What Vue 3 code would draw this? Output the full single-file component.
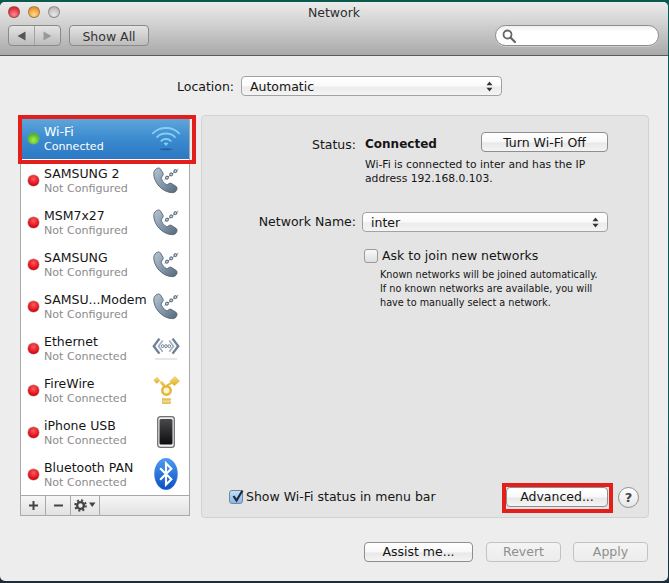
<script setup>
const rows = [
  { name: 'SAMSUNG 2', sub: 'Not Configured', icon: 'phone' },
  { name: 'MSM7x27', sub: 'Not Configured', icon: 'phone' },
  { name: 'SAMSUNG', sub: 'Not Configured', icon: 'phone' },
  { name: 'SAMSU...Modem', sub: 'Not Configured', icon: 'phone' },
  { name: 'Ethernet', sub: 'Not Connected', icon: 'ethernet' },
  { name: 'FireWire', sub: 'Not Connected', icon: 'firewire' },
  { name: 'iPhone USB', sub: 'Not Connected', icon: 'iphone' },
  { name: 'Bluetooth PAN', sub: 'Not Connected', icon: 'bluetooth' }
]
</script>

<template>
  <div class="page">
    <svg class="defs" width="0" height="0" aria-hidden="true">
      <defs>
        <linearGradient id="gPhone" x1="0" y1="0" x2="1" y2="1">
          <stop offset="0" stop-color="#b9c6d2" />
          <stop offset="0.55" stop-color="#8095a8" />
          <stop offset="1" stop-color="#56687a" />
        </linearGradient>
        <linearGradient id="gBt" x1="0" y1="0" x2="0" y2="1">
          <stop offset="0" stop-color="#4f9bf0" />
          <stop offset="1" stop-color="#0b4fc4" />
        </linearGradient>
        <linearGradient id="gGold" x1="0" y1="0" x2="0" y2="1">
          <stop offset="0" stop-color="#f6dc78" />
          <stop offset="1" stop-color="#dfae2c" />
        </linearGradient>
        <linearGradient id="gScreen" x1="0" y1="0" x2="0" y2="1">
          <stop offset="0" stop-color="#4a4a4a" />
          <stop offset="1" stop-color="#0c0c0c" />
        </linearGradient>
        <symbol id="i-phone" viewBox="0 0 32 32">
          <path d="M3 8C4 4 8 2 10 4L13 9C13.6 11 11 12.500 10.800 14C11.500 16.500 14 20 17 21.200C18.500 21 19.500 18.500 21.500 19.500L27 23C29 25 27 29.500 23 29.500C12 29.500 2 18 3 8Z" fill="url(#gPhone)" stroke="#4f6070" stroke-width="0.900" />
          <path d="M14.500 15.500L29 4.500" stroke="#6c7c8c" stroke-width="1" />
          <circle cx="17" cy="13.500" r="1.600" fill="#c6d0da" stroke="#46586a" stroke-width="1" />
          <circle cx="21.500" cy="10" r="1.600" fill="#c6d0da" stroke="#46586a" stroke-width="1" />
          <circle cx="26" cy="6.500" r="1.600" fill="#c6d0da" stroke="#46586a" stroke-width="1" />
        </symbol>
        <symbol id="i-wifi" viewBox="0 0 32 32">
          <g fill="none" stroke="#86cdf6" stroke-linecap="round">
            <path d="M2 11C9 3.500 23 3.500 30 11" stroke-width="2" />
            <path d="M6.500 15C11 10 21 10 25.500 15" stroke-width="2" />
            <path d="M11 19C13.500 16.500 18.500 16.500 21 19" stroke-width="2" />
          </g>
          <path d="M13.500 21.500Q16 20 18.500 21.500L16 24.500Z" fill="#86cdf6" />
          <ellipse cx="16" cy="28" rx="7" ry="1.300" fill="#1d5a94" opacity="0.7" />
        </symbol>
        <symbol id="i-ethernet" viewBox="0 0 32 32">
          <g fill="none" stroke-linejoin="miter">
            <path d="M9 6L3 14L9 22" stroke="#6f8096" stroke-width="2.600" />
            <path d="M12.500 8L8 14L12.500 20" stroke="#a3b0c0" stroke-width="1.800" />
            <path d="M23 6L29 14L23 22" stroke="#6f8096" stroke-width="2.600" />
            <path d="M19.500 8L24 14L19.500 20" stroke="#a3b0c0" stroke-width="1.800" />
          </g>
          <circle cx="12.500" cy="14" r="1.500" fill="#fff" stroke="#5f6f80" stroke-width="0.900" />
          <circle cx="16" cy="14" r="1.500" fill="#fff" stroke="#5f6f80" stroke-width="0.900" />
          <circle cx="19.500" cy="14" r="1.500" fill="#fff" stroke="#5f6f80" stroke-width="0.900" />
          <rect x="4" y="27" width="24" height="1.500" rx="0.700" fill="#e0e0e0" />
        </symbol>
        <symbol id="i-firewire" viewBox="0 0 32 32">
          <g fill="url(#gGold)" stroke="#d3a52a" stroke-width="0.400">
            <path d="M3 5.500L6.500 2.500L9.500 6L6 9Z" />
            <path d="M9.500 8L11.500 6.500L15 10.500L13 12Z" />
            <path d="M20 7L25.500 1.500L30.500 6.500L25 11.500Z" />
            <rect x="12" y="25" width="9" height="2" />
            <rect x="12" y="28.500" width="9" height="2" />
          </g>
          <circle cx="16.500" cy="16.500" r="4.500" fill="#fbf3cf" stroke="#e3b636" stroke-width="2.600" />
          <path d="M17 11L22 8.500" stroke="#e3b636" stroke-width="2" />
        </symbol>
        <symbol id="i-iphone" viewBox="0 0 18 32">
          <rect x="0.700" y="0.700" width="16.600" height="30.600" rx="2.600" fill="#eceef0" stroke="#6e7073" stroke-width="1.300" />
          <rect x="2.500" y="3" width="13" height="25.500" rx="1.500" fill="url(#gScreen)" />
        </symbol>
        <symbol id="i-bluetooth" viewBox="0 0 22 30">
          <ellipse cx="11" cy="15" rx="10.800" ry="14.800" fill="url(#gBt)" stroke="#3f86df" stroke-width="0.500" />
          <path d="M5.500 9.500L16 20L11 25V5L16 10L5.500 20.500" fill="none" stroke="#fff" stroke-width="2" />
        </symbol>
        <symbol id="i-updown" viewBox="0 0 7 11">
          <path d="M3.500 0.500L6.500 4.300H0.500Z" fill="#333" />
          <path d="M3.500 10.500L6.500 6.700H0.500Z" fill="#333" />
        </symbol>
      </defs>
    </svg>

    <div class="window">
      <header class="toolbar">
        <div class="titlebar">
          <div class="lights">
            <span class="light red"></span>
            <span class="light amber"></span>
            <span class="light grey"></span>
          </div>
          <div class="title">Network</div>
        </div>
        <div class="tools">
          <div class="segment">
            <span class="seg"><svg width="9" height="10" viewBox="0 0 9 10"><path d="M0.500 5L8.500 0.500V9.500Z" fill="#555" /></svg></span>
            <span class="seg off"><svg width="9" height="10" viewBox="0 0 9 10"><path d="M8.500 5L0.500 0.500V9.500Z" fill="#999" /></svg></span>
          </div>
          <button class="tool-btn">Show All</button>
          <div class="search">
            <svg width="14" height="14" viewBox="0 0 14 14">
              <circle cx="5.500" cy="5.500" r="4" fill="none" stroke="#666" stroke-width="1.800" />
              <path d="M8.500 8.500L13 13" stroke="#666" stroke-width="2.200" stroke-linecap="round" />
            </svg>
          </div>
        </div>
      </header>

      <div class="location">
        <span class="loc-label">Location:</span>
        <div class="select loc-select">
          <span>Automatic</span>
          <svg width="7" height="11"><use href="#i-updown" /></svg>
        </div>
      </div>

      <div class="content">
        <aside class="sidebar">
          <div class="list">
            <div class="row selected">
              <span class="dot green"></span>
              <div class="row-text">
                <div class="row-name">Wi-Fi</div>
                <div class="row-sub">Connected</div>
              </div>
              <svg class="row-icon"><use href="#i-wifi" /></svg>
            </div>
            <div v-for="r in rows" :key="r.name" class="row">
              <span class="dot"></span>
              <div class="row-text">
                <div class="row-name">{{ r.name }}</div>
                <div class="row-sub">{{ r.sub }}</div>
              </div>
              <svg class="row-icon"><use :href="'#i-' + r.icon" /></svg>
            </div>
          </div>
          <div class="list-foot">
            <span class="foot-cell add">
              <svg width="11" height="11" viewBox="0 0 11 11"><path d="M5.500 1V10M1 5.500H10" stroke="#444" stroke-width="2" /></svg>
            </span>
            <span class="foot-cell add">
              <svg width="11" height="11" viewBox="0 0 11 11"><path d="M1 5.500H10" stroke="#444" stroke-width="2" /></svg>
            </span>
            <span class="foot-cell gear">
              <svg width="22" height="13" viewBox="0 0 22 13">
                <circle cx="6.500" cy="6.500" r="3.400" fill="none" stroke="#444" stroke-width="2.400" />
                <circle cx="6.500" cy="6.500" r="5.300" fill="none" stroke="#444" stroke-width="2" stroke-dasharray="2 2.160" />
                <path d="M15 3.500H21.500L18.250 8Z" fill="#444" />
              </svg>
            </span>
            <span class="foot-rest"></span>
          </div>
        </aside>

        <section class="panel">
          <div class="form-row status-row">
            <span class="label">Status:</span>
            <strong class="status">Connected</strong>
            <button class="btn wifi-off">Turn Wi-Fi Off</button>
          </div>
          <p class="desc">Wi-Fi is connected to inter and has the IP<br />address 192.168.0.103.</p>
          <div class="form-row name-row">
            <span class="label name-label">Network Name:</span>
            <div class="select name-select">
              <span>inter</span>
              <svg width="7" height="11"><use href="#i-updown" /></svg>
            </div>
          </div>
          <label class="ask">
            <span class="check"></span>
            <span class="ask-text">Ask to join new networks</span>
          </label>
          <p class="note">Known networks will be joined automatically.<br />If no known networks are available, you will<br />have to manually select a network.</p>

          <div class="panel-foot">
            <span class="check checked">
              <svg width="15" height="15" viewBox="0 0 15 15"><path d="M3.500 7L6.500 11.500L12.500 1.500" fill="none" stroke="#1d2c40" stroke-width="2.200" /></svg>
            </span>
            <span class="show">Show Wi-Fi status in menu bar</span>
            <button class="btn advanced">Advanced...</button>
            <span class="help">?</span>
          </div>
        </section>
      </div>

      <footer class="actions">
        <button class="btn assist">Assist me...</button>
        <button class="btn dis revert">Revert</button>
        <button class="btn dis apply">Apply</button>
      </footer>

      <div class="mark mark-wifi"></div>
      <div class="mark mark-adv"></div>
    </div>
  </div>
</template>

<style scoped>
.page {
  width: 669px;
  height: 583px;
  padding-top: 2px;
  box-sizing: border-box;
  overflow: hidden;
  background: linear-gradient(180deg, #0c5a4e 0%, #17584e 70%, #1d2d38 100%);
  font-family: "DejaVu Sans", sans-serif;
  font-size: 12.500px;
  color: #151515;
}
.defs { position: absolute; }
.window {
  position: relative;
  width: 668px;
  height: 579px;
  background: #ededed;
  border-radius: 5px;
  overflow: hidden;
}
.toolbar {
  height: 54px;
  box-sizing: border-box;
  border-bottom: 1px solid #5c5c5c;
  background: linear-gradient(180deg, #ececec 0%, #d2d2d2 40%, #a9a9a9 100%);
}
.titlebar {
  position: relative;
  height: 22px;
  display: flex;
  align-items: center;
  justify-content: center;
}
.lights {
  position: absolute;
  left: 8px;
  top: 4px;
  display: flex;
  gap: 8px;
}
.light {
  width: 12px;
  height: 12px;
  border-radius: 50%;
  box-sizing: border-box;
  border: 1px solid rgba(80, 80, 80, 0.45);
}
.red { background: radial-gradient(circle at 50% 75%, #ff8d90, #e23a44 60%, #b71e2a); }
.amber { background: radial-gradient(circle at 50% 75%, #ffdc8a, #eea33a 60%, #c77c1e); }
.grey { background: radial-gradient(circle at 50% 75%, #e8e8e8, #c4c4c4 60%, #a2a2a2); }
.title {
  color: #2e2e2e;
  padding-bottom: 2px;
}
.tools {
  display: flex;
  align-items: center;
  padding: 1px 9px 0 8px;
  height: 21px;
}
.segment {
  width: 53px;
  height: 21px;
  box-sizing: border-box;
  display: flex;
  border: 1px solid #8a8a8a;
  border-radius: 4px;
  background: linear-gradient(180deg, #e4e4e4, #bcbcbc);
}
.seg {
  flex: 1;
  display: flex;
  align-items: center;
  justify-content: center;
}
.seg + .seg { border-left: 1px solid #a2a2a2; }
.tool-btn {
  width: 80px;
  height: 21px;
  margin-left: 8px;
  padding: 2px 0 0;
  border: 1px solid #8a8a8a;
  border-radius: 4px;
  background: linear-gradient(180deg, #e4e4e4, #bcbcbc);
  font: inherit;
  color: #333;
}
.search {
  margin-left: auto;
  width: 164px;
  height: 21px;
  box-sizing: border-box;
  padding-left: 6px;
  display: flex;
  align-items: center;
  border: 1px solid #8c8c8c;
  border-radius: 11px;
  background: linear-gradient(180deg, #f0f0f0, #ffffff 30%);
  box-shadow: 0 1px 0 rgba(255, 255, 255, 0.35);
}
.location {
  display: flex;
  align-items: center;
  height: 20px;
  margin-top: 20px;
  padding-left: 177px;
}
.loc-label { width: 64px; }
.select {
  height: 20px;
  box-sizing: border-box;
  display: flex;
  align-items: center;
  justify-content: space-between;
  border: 1px solid #a2a2a2;
  border-radius: 4px;
  background: linear-gradient(180deg, #ffffff 0%, #fafafa 50%, #ececec 55%, #f4f4f4 100%);
}
.loc-select {
  width: 261px;
  padding: 0 8px 0 8px;
}
.content {
  display: flex;
  margin-top: 19px;
  padding-left: 20px;
  gap: 11px;
}
.sidebar {
  width: 170px;
  height: 401px;
  box-sizing: border-box;
  border: 1px solid #a9a9a9;
  background: #fff;
  display: flex;
  flex-direction: column;
}
.list {
  flex: 1;
  padding-top: 1px;
}
.row {
  height: 42px;
  display: flex;
  align-items: center;
  padding-left: 7px;
}
.row.selected {
  background: linear-gradient(180deg, #62a8dc 0%, #3c8ccf 50%, #2c78c4 100%);
  color: #fff;
}
.dot {
  flex: none;
  width: 11px;
  height: 11px;
  border-radius: 50%;
  background: radial-gradient(circle at 50% 35%, #ff5a5a, #e0101c 60%, #a4000c);
  box-shadow: 0 0 0 0.5px #999;
}
.dot.green { background: radial-gradient(circle at 50% 65%, #a8ec5c, #58c01e 60%, #3c8e12); }
.row-text {
  margin-left: 5px;
  padding-top: 1px;
  width: 108px;
  white-space: nowrap;
}
.row-name { line-height: 15px; }
.row-sub {
  line-height: 15px;
  font-size: 11.100px;
  color: #8c8c8c;
}
.selected .row-sub { color: #fff; }
.row-icon {
  width: 30px;
  height: 32px;
  flex: none;
  margin-left: -1px;
}
.list-foot {
  height: 20px;
  display: flex;
  border-top: 1px solid #a9a9a9;
  background: linear-gradient(180deg, #f6f6f6, #e2e2e2);
}
.foot-cell {
  display: flex;
  align-items: center;
  justify-content: center;
  border-right: 1px solid #a9a9a9;
}
.add { width: 24px; }
.gear { width: 28px; }
.foot-rest { flex: 1; }
.panel {
  width: 448px;
  height: 403px;
  box-sizing: border-box;
  border: 1px solid #d2d2d2;
  border-radius: 4px;
  background: #e4e4e4;
  display: flex;
  flex-direction: column;
  padding-top: 16px;
}
.form-row {
  display: flex;
  align-items: center;
  height: 20px;
}
.label {
  width: 154px;
  text-align: right;
  flex: none;
}
.status-row .label,
.status {
  padding-top: 4px;
}
.name-label { padding-bottom: 2px; }
.status {
  margin-left: 9px;
  width: 116px;
  flex: none;
  font-size: 12px;
}
.btn {
  height: 20px;
  padding: 0;
  box-sizing: border-box;
  border: 1px solid #8e8e8e;
  border-radius: 4px;
  background: linear-gradient(180deg, #ffffff 0%, #f8f8f8 50%, #e8e8e8 55%, #f4f4f4 100%);
  font: inherit;
  color: #151515;
}
.wifi-off { width: 127px; }
.desc {
  margin: 6px 0 0 163px;
  font-size: 10.750px;
  line-height: 14px;
}
.name-row { margin-top: 26px; }
.name-select {
  margin-left: 6px;
  width: 246px;
  padding: 0 8px 0 8px;
}
.ask {
  display: flex;
  align-items: center;
  gap: 4px;
  height: 14px;
  margin: 17px 0 0 162px;
}
.ask-text { padding-bottom: 2px; }
.check {
  flex: none;
  width: 14px;
  height: 14px;
  box-sizing: border-box;
  border: 1px solid #9a9a9a;
  border-radius: 3px;
  background: linear-gradient(180deg, #fafafa, #dedede);
}
.check.checked {
  position: relative;
  border-color: #6f88a8;
  background: linear-gradient(180deg, #c4def6, #8ab8e6);
}
.check.checked svg {
  position: absolute;
  left: -0.5px;
  top: -2.5px;
}
.note {
  margin: 5px 0 0 178px;
  font-size: 9.700px;
  line-height: 14px;
}
.panel-foot {
  margin-top: auto;
  margin-bottom: 10px;
  padding: 0 9px 0 27px;
  display: flex;
  align-items: center;
  height: 20px;
}
.show {
  margin-left: 3px;
  padding-bottom: 2px;
}
.advanced {
  margin-left: auto;
  width: 102px;
  padding-bottom: 2px;
}
.help {
  width: 21px;
  height: 21px;
  box-sizing: border-box;
  margin-left: 10px;
  display: flex;
  align-items: center;
  justify-content: center;
  border: 1px solid #8e8e8e;
  border-radius: 50%;
  background: linear-gradient(180deg, #ffffff, #e6e6e6);
  font-weight: 700;
  font-size: 13px;
  color: #444;
}
.actions {
  display: flex;
  justify-content: flex-end;
  margin-top: 24px;
  padding-right: 20px;
}
.actions .btn { padding-bottom: 2px; }
.assist { width: 109px; }
.revert { width: 75px; margin-left: 13px; }
.apply { width: 75px; margin-left: 12px; }
.dis {
  border-color: #c2c2c2;
  color: #8e8e8e;
  background: linear-gradient(180deg, #f4f4f4, #ececec);
}
.mark {
  position: absolute;
  box-sizing: border-box;
  border: 4px solid #e21f1b;
  pointer-events: none;
}
.mark-wifi {
  left: 18px;
  top: 113px;
  width: 178px;
  height: 49px;
}
.mark-adv {
  left: 502px;
  top: 481px;
  width: 111px;
  height: 30px;
}
</style>
